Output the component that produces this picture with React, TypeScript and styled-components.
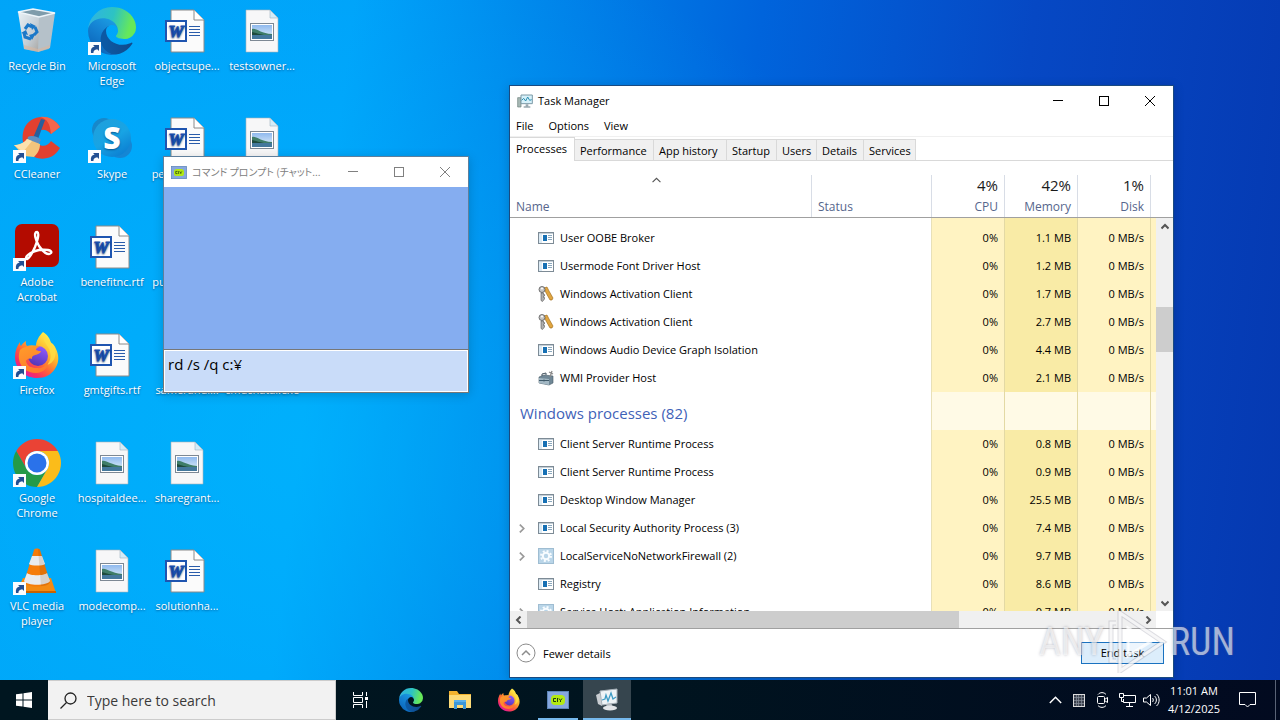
import React from "react";
import styled, { createGlobalStyle, css } from "styled-components";

const GlobalStyle = createGlobalStyle`
  *, *::before, *::after { box-sizing: border-box; }
  body {
    margin: 0;
    font-family: "Open Sans", "Noto Sans", "Noto Sans CJK JP", sans-serif;
    font-size: 11px;
    color: #000;
  }
  button, input, textarea { font: inherit; color: inherit; }
  button { border: 0; padding: 0; background: none; }
  svg { display: block; flex: none; }
`;

const Screen = styled.div`
  min-height: 100vh;
  display: flex;
  flex-direction: column;
  overflow: hidden;
`;

const Desktop = styled.main`
  position: relative;
  flex: 1;
  min-height: 680px;
  overflow: hidden;
  background:
    radial-gradient(ellipse 50% 80% at 24% 66%, rgba(0, 190, 255, 0.5), transparent),
    linear-gradient(97deg, #00a4f8 0%, #00a2fa 26%, #0088ec 38%, #0064dc 56%, #0648c4 76%, #0538b0 100%);
`;

const IconGrid = styled.div`
  display: grid;
  grid-template-columns: repeat(4, 75px);
  grid-auto-rows: 108px;
`;

const Shortcut = styled.button<{ $col: number; $row: number }>`
  grid-column: ${(p) => p.$col};
  grid-row: ${(p) => p.$row};
  display: flex;
  flex-direction: column;
  align-items: center;
  justify-content: flex-start;
  gap: 3px;
  padding: 7px 1px 0 0;
  color: #fff;
  line-height: 15px;
  text-shadow: 0 1px 2px rgba(0, 40, 90, 0.6);
`;

const ShortcutLabel = styled.span`
  white-space: pre-line;
`;

/* ---------- windows ---------- */

const Window = styled.section<{ $left: number; $top: number; $width: number; $border: string }>`
  position: absolute;
  left: ${(p) => p.$left}px;
  top: ${(p) => p.$top}px;
  width: ${(p) => p.$width}px;
  border: 1px solid ${(p) => p.$border};
  background: #fff;
  box-shadow: 0 2px 10px rgba(0, 0, 0, 0.18);
`;

const TitleBar = styled.header<{ $inactive?: boolean }>`
  display: flex;
  align-items: center;
  gap: 5px;
  height: 30px;
  padding-left: 7px;
  color: ${(p) => (p.$inactive ? "#808080" : "#000")};
  line-height: 16px;
`;

const Title = styled.h1<{ $kana?: boolean }>`
  flex: 1;
  min-width: 0;
  margin: 0;
  font-size: 11px;
  font-weight: 400;
  white-space: nowrap;
  ${(p) =>
    p.$kana &&
    css`
      font-family: "Noto Sans CJK JP", sans-serif;
      font-size: 10px;
      font-feature-settings: "palt";
    `}
`;

const Controls = styled.div`
  display: flex;
  height: 30px;
`;

const Control = styled.button`
  width: 46px;
  display: grid;
  place-items: center;
`;

const PromptOutput = styled.div`
  height: 163px;
  background: #85adf0;
`;

const PromptInput = styled.textarea`
  display: block;
  width: 100%;
  height: 42px;
  padding: 2px 3px;
  border: 1px solid #fff;
  outline: 1px solid #777;
  outline-offset: 0;
  resize: none;
  overflow: hidden;
  background: #c9dcf9;
  font-size: 15px;
  line-height: 22px;
`;

const MenuBar = styled.nav`
  display: flex;
  gap: 15px;
  height: 21px;
  padding: 0 6px 1px;
  border-bottom: 1px solid #f0f0f0;
  line-height: 18px;
`;

const TabBar = styled.div`
  display: flex;
  align-items: flex-end;
  height: 24px;
  border-bottom: 1px solid #d9d9d9;
`;

const Tab = styled.button<{ $width: number; $active?: boolean }>`
  width: ${(p) => p.$width}px;
  height: ${(p) => (p.$active ? 24 : 21)}px;
  padding: 1px 0 0 5px;
  text-align: left;
  white-space: nowrap;
  line-height: 20px;
  border: 1px solid #d9d9d9;
  border-left-width: 0;
  border-bottom-width: 0;
  background: #f0f0f0;
  ${(p) =>
    p.$active &&
    css`
      margin-bottom: -1px;
      padding: 0 0 2px 6px;
      background: #fff;
    `}
`;

const ListArea = styled.div`
  display: grid;
  grid-template-columns: minmax(0, 1fr) 17px;
  height: 450px;
`;

const ListClip = styled.div`
  overflow: hidden;
`;

const ScrollColumn = styled.div`
  display: flex;
  flex-direction: column;
`;

const HeaderFill = styled.div`
  height: 57px;
  border-bottom: 1px solid #a0a0a0;
`;

const Table = styled.table`
  width: 100%;
  table-layout: fixed;
  border-collapse: separate;
  border-spacing: 0;
`;

const HeadCell = styled.th<{ $numeric?: boolean }>`
  height: 57px;
  padding: 14px 0 0;
  border-bottom: 1px solid #a0a0a0;
  font-size: 12px;
  font-weight: 400;
  color: #56668c;
  vertical-align: top;
  text-align: ${(p) => (p.$numeric ? "right" : "left")};
`;

const HeadInner = styled.div`
  display: flex;
  flex-direction: column;
  height: 42px;
  padding: 0 6px;
  line-height: 21px;
  border-right: 1px solid #d8dde6;
`;

const Total = styled.span`
  height: 21px;
  font-size: 15px;
  color: #1a1a1a;
`;

const SortMark = styled.span`
  height: 21px;
  display: flex;
  justify-content: center;
  padding: 1px 8px 0 0;
`;

const Row = styled.tr<{ $height: number }>`
  height: ${(p) => p.$height}px;
`;

const NameCell = styled.td`
  padding: 0 0 0 7px;
  white-space: nowrap;
`;

const NameLine = styled.div`
  display: grid;
  grid-template-columns: 9px 16px 1fr;
  column-gap: 12px;
  align-items: center;
  line-height: 16px;
  & > :last-child { margin-left: -6px; }
`;

const GroupCell = styled.th`
  padding: 4px 0 0 10px;
  text-align: left;
  font-size: 15px;
  font-weight: 400;
  line-height: 20px;
  color: #3f62b8;
`;

const tones = { light: "#fff3c2", strong: "#f9eba6", pale: "#fffae6" };

const ValueCell = styled.td<{ $tone: keyof typeof tones }>`
  padding: 0 6px 0 0;
  border-right: 1px solid #e3d9a4;
  background: ${(p) => tones[p.$tone]};
  text-align: right;
  white-space: nowrap;
  line-height: 16px;
`;

const PlainCell = styled.td`
  padding: 0;
  border-right: 1px solid #e8e0b8;
`;

const TailCell = styled.td<{ $tone: keyof typeof tones }>`
  padding: 0;
  background: ${(p) => tones[p.$tone]};
`;

const ScrollTrack = styled.div<{ $horizontal?: boolean }>`
  display: flex;
  flex-direction: ${(p) => (p.$horizontal ? "row" : "column")};
  background: #f0f0f0;
  ${(p) => (p.$horizontal ? "height: 17px; margin-right: 17px;" : "flex: 1;")}
`;

const ScrollButton = styled.button`
  width: 17px;
  height: 17px;
  display: grid;
  place-items: center;
`;

const ScrollSpace = styled.div<{ $grow: number; $thumb?: boolean }>`
  flex: ${(p) => p.$grow} 1 0;
  background: ${(p) => (p.$thumb ? "#cdcdcd" : "transparent")};
`;

const Footer = styled.footer`
  display: flex;
  align-items: center;
  justify-content: space-between;
  height: 49px;
  padding: 0 9px 0 6px;
  border-top: 1px solid #a0a0a0;
`;

const DetailsToggle = styled.button`
  display: flex;
  align-items: center;
  gap: 7px;
`;

const EndTask = styled.button`
  width: 83px;
  height: 22px;
  border: 1px solid #1a72c0;
  background: #dcedfb;
  line-height: 18px;
`;

/* ---------- watermark ---------- */

const Watermark = styled.div`
  position: absolute;
  z-index: 2;
  left: 1039px;
  top: 610px;
  display: flex;
  align-items: center;
  gap: 2px;
  height: 64px;
  font-family: "Roboto Condensed", "Liberation Sans Narrow", "Roboto", sans-serif;
  font-size: 38px;
  line-height: 48px;
  color: rgba(255, 255, 255, 0.6);
  text-shadow: 0 0 3px rgba(90, 90, 110, 0.4);
  pointer-events: none;
`;

/* ---------- taskbar ---------- */

const Taskbar = styled.footer`
  display: flex;
  height: 40px;
  background: linear-gradient(90deg, #001620, #00141f 50%, #020a20);
  color: #fff;
`;

const TaskButton = styled.button<{ $running?: boolean; $active?: boolean }>`
  width: 48px;
  display: grid;
  place-items: center;
  background: ${(p) => (p.$active ? "#36454e" : "transparent")};
  ${(p) =>
    (p.$running || p.$active) &&
    css`
      padding-top: 2px;
      border-bottom: 2px solid #76b9ed;
    `}
  ${(p) =>
    p.$running &&
    css`
      width: 40px;
      margin: 0 4px;
    `}
`;

const TaskViewButton = styled(TaskButton)`
  margin-right: 2px;
`;

const Search = styled.label`
  display: flex;
  align-items: center;
  gap: 10px;
  width: 288px;
  padding-left: 12px;
  border: 1px solid #ccc;
  border-left: 0;
  background: #f2f2f2;
  color: #222;
`;

const SearchInput = styled.input`
  flex: 1;
  min-width: 0;
  padding: 0;
  border: 0;
  outline: 0;
  background: none;
  font-size: 14px;
  &::placeholder { color: #3a3a3a; opacity: 1; }
`;

const Apps = styled.div`
  display: flex;
  gap: 1px;
  flex: 1;
`;

const Tray = styled.div`
  display: flex;
  align-items: center;
`;

const TrayButton = styled.button`
  width: 24px;
  height: 40px;
  display: grid;
  place-items: center;
`;

const Clock = styled.time`
  width: 62px;
  line-height: 18px;
  text-align: center;
  white-space: nowrap;
`;

const NoticeButton = styled(TrayButton)`
  width: 44px;
  margin-right: 6px;
`;

const ShowDesktop = styled.button`
  width: 5px;
  height: 40px;
  border-left: 1px solid #5a6376;
`;

/* ---------- icons ---------- */

const LinkBadge = () => (
  <g>
    <rect x="0" y="35" width="13" height="13" fill="#fafcff" />
    <path d="M3 46c-.6-3.6.6-6 3.600-6.400L5 38h6v6l-1.800-1.800C6.500 42.600 5.400 43.600 5.400 46z" fill="#224f93" />
  </g>
);

const EdgeIcon = ({ size = 48, link = false }: { size?: number; link?: boolean }) => (
  <svg width={size} height={size} viewBox="0 0 48 48" aria-hidden="true">
    <defs>
      <linearGradient id="edgeA" x1=".2" y1=".5" x2="1" y2=".5"><stop stopColor="#0c59a4" /><stop offset="1" stopColor="#114a8b" /></linearGradient>
      <linearGradient id="edgeB" x1=".8" y1=".1" x2=".3" y2="1"><stop stopColor="#1b9de2" /><stop offset=".4" stopColor="#1584d4" /><stop offset="1" stopColor="#0a63b8" /></linearGradient>
      <linearGradient id="edgeC" x1="0" y1=".3" x2="1" y2=".5"><stop stopColor="#2fb3e3" /><stop offset=".5" stopColor="#2dc3c3" /><stop offset=".9" stopColor="#66e85a" /></linearGradient>
    </defs>
    <g transform="scale(.1875) translate(-4.630 -4.920)">
      <path fill="url(#edgeA)" d="M235.680 195.460a93.730 93.730 0 0 1-10.540 4.710 101.870 101.870 0 0 1-35.900 6.460c-47.320 0-88.540-32.550-88.540-74.320A31.480 31.480 0 0 1 117.130 105c-42.800 1.800-53.800 46.400-53.800 72.530 0 73.880 68.090 81.370 82.760 81.370 7.910 0 19.840-2.300 27-4.560l1.310-.44a128.340 128.340 0 0 0 66.600-52.800 4 4 0 0 0-5.320-5.640Z" />
      <path fill="url(#edgeB)" d="M110.340 246.340A79.200 79.200 0 0 1 87.600 225a80.720 80.720 0 0 1 29.530-120c3.120-1.470 8.450-4.130 15.540-4a32.350 32.350 0 0 1 25.690 13 31.880 31.880 0 0 1 6.360 18.660c0-.21 24.460-79.600-80-79.600-43.900 0-80 41.660-80 78.210a130.150 130.150 0 0 0 12.110 56 128 128 0 0 0 156.380 67.110 75.550 75.550 0 0 1-62.780-8Z" />
      <path fill="url(#edgeC)" d="M156.940 153.780c-.81 1.050-3.300 2.500-3.300 5.660 0 2.610 1.700 5.120 4.720 7.230 14.380 10 41.490 8.680 41.560 8.680a59.560 59.560 0 0 0 30.270-8.350 61.380 61.380 0 0 0 30.430-52.880c.26-22.410-8-37.310-11.340-43.910-21.190-41.450-66.930-65.290-116.670-65.290a128 128 0 0 0-128 126.200c.48-36.540 36.800-66.050 80-66.050 3.500 0 23.460.34 42 10.070 16.340 8.580 24.900 18.940 30.850 29.210 6.180 10.670 7.280 24.150 7.280 29.520s-2.740 13.330-7.800 19.910Z" />
    </g>
    {link && <LinkBadge />}
  </svg>
);

const FirefoxIcon = ({ size = 48, link = false }: { size?: number; link?: boolean }) => (
  <svg width={size} height={size} viewBox="0 0 48 48" aria-hidden="true">
    <defs>
      <linearGradient id="ffA" x1=".8" y1=".1" x2=".2" y2=".9"><stop stopColor="#fff04a" /><stop offset=".35" stopColor="#ffb22c" /><stop offset=".6" stopColor="#ff6a35" /><stop offset=".85" stopColor="#f52f62" /><stop offset="1" stopColor="#e3209a" /></linearGradient>
      <linearGradient id="ffB" x1=".7" y1="0" x2=".3" y2="1"><stop stopColor="#9059ff" /><stop offset="1" stopColor="#5235b4" /></linearGradient>
      <linearGradient id="ffC" x1=".2" y1="0" x2=".6" y2="1"><stop stopColor="#ff9b2a" /><stop offset="1" stopColor="#ff7a2c" /></linearGradient>
    </defs>
    <path d="M30 1c5 3 7 7 8 11 3 1 4 4 5 6 3 6 3 13 0 18-4 8-11 11-19 11C12 47 2 38 2 26c0-6 2-11 5-15 0 2 0 3 1 4 1-2 3-4 5-5-.5 2 0 4 1 5 3-1 6-1 9 0 0-5 3-10 7-14z" fill="url(#ffA)" />
    <path d="M31 2c-2 6 1 9 4 14 4 7 3 14-1 18 7-2 10-9 8-17-2-6-9-8-11-15z" fill="#ffdf45" opacity=".8" />
    <circle cx="25" cy="25" r="10" fill="url(#ffB)" />
    <path d="M7 19c3-3 7-4 11-2 2-3 6-3 9-1-3 0-4 2-4 3 2 1 4 1 5 1-1 3-3 3-6 4-3 1-3 2-3 4-3-1-5 0-6 2 1 5 5 7 11 7 6 1 10-3 11-8 1 8-5 13-12 13C14 42 7 36 6 28c-.5-3 0-6 1-9z" fill="url(#ffC)" />
    {link && <LinkBadge />}
  </svg>
);

const BinIcon = () => (
  <svg width="48" height="48" viewBox="0 0 48 48" aria-hidden="true">
    <defs>
      <linearGradient id="binA" x1="0" y1="0" x2="1" y2="1"><stop stopColor="#e9f1f6" /><stop offset=".6" stopColor="#c4cdd4" /><stop offset="1" stopColor="#a8a49f" /></linearGradient>
    </defs>
    <path d="M5 5l22 4-1 36-15-3z" fill="url(#binA)" />
    <path d="M26 9l16-3-5 35-12 4z" fill="#b5c1c9" />
    <path d="M5 5L20 2l22 4-16 4z" fill="#7f9cab" stroke="#eef5fa" strokeWidth="1.500" />
    <path d="M11 38l14 4 12-4-1 4-11 3-14-3z" fill="#d8b8a0" opacity=".6" />
    <path d="M12 22l3-4 4 2M22 20l2 5-3 3M18 32l-6-2-1-4" fill="none" stroke="#1b78c8" strokeWidth="3" />
    <path d="M17 16l6 3-4 4zM23 26l-4 7-3-5zM8 26l5-3 2 5z" fill="#1b78c8" />
  </svg>
);

const CCleanerIcon = () => (
  <svg width="48" height="48" viewBox="0 0 48 48" aria-hidden="true">
    <path d="M47 12C38-2 17-1 11 14c-6 18 8 33 23 29 6-1 10-5 13-10l-9-7c-4 7-13 6-15-1-2-8 7-15 15-6z" fill="#e2402f" />
    <path d="M47 12C42 4 34 1 27 2c7 2 10 6 11 17z" fill="#f4664c" />
    <path d="M28 4l4 1-7 19-5-1z" fill="#285f9c" />
    <path d="M15 22c3-2 10-1 13 3l-3 5-11-4z" fill="#5d8ec2" />
    <path d="M14 24l13 5c0 6-3 10-6 13l-10-1-10-11c5 0 10-2 13-6z" fill="#f3c57c" />
    <path d="M14 24l5 2-9 11-9-7c5 0 10-2 13-6z" fill="#fce2ae" />
    <LinkBadge />
  </svg>
);

const SkypeIcon = () => (
  <svg width="48" height="48" viewBox="0 0 48 48" aria-hidden="true">
    <defs><linearGradient id="skyA" x1=".2" y1="0" x2=".8" y2="1"><stop stopColor="#1fa0dc" /><stop offset=".5" stopColor="#18a4e4" /><stop offset="1" stopColor="#0b7cd0" /></linearGradient></defs>
    <circle cx="16" cy="15" r="12" fill="#1788ca" />
    <circle cx="32" cy="31" r="12" fill="#1586d4" />
    <circle cx="24" cy="23" r="19" fill="url(#skyA)" />
    <text x="24" y="34" textAnchor="middle" fontFamily="Open Sans, sans-serif" fontSize="30" fontWeight="800" fill="#fff">S</text>
    <LinkBadge />
  </svg>
);

const AcrobatIcon = () => (
  <svg width="48" height="48" viewBox="0 0 48 48" aria-hidden="true">
    <rect x="2" y="1" width="44" height="43" rx="7" fill="#b30b00" />
    <path d="M24 9c-4 0-1 9 2 14 4 6 9 10 12 7 2-3-6-4-12-3-6 1-13 5-13 8 1 4 6-4 9-11 2-5 5-14 2-15z" fill="none" stroke="#fff" strokeWidth="2.400" strokeLinejoin="round" />
    <LinkBadge />
  </svg>
);

const ChromeIcon = () => (
  <svg width="48" height="48" viewBox="0 0 48 48" aria-hidden="true">
    <path d="M24 12h20.780A24 24 0 0 0 3.220 12l10.390 18A12 12 0 0 1 24 12z" fill="#ea4335" />
    <path d="M13.610 30L3.220 12A24 24 0 0 0 24 48l10.390-18a12 12 0 0 1-20.780 0z" fill="#249a48" />
    <path d="M34.390 30L24 48a24 24 0 0 0 20.780-36H24a12 12 0 0 1 10.390 18z" fill="#fbbc1a" />
    <circle cx="24" cy="24" r="12" fill="#fff" />
    <circle cx="24" cy="24" r="9.500" fill="#2a72ea" />
    <LinkBadge />
  </svg>
);

const VlcIcon = () => (
  <svg width="48" height="48" viewBox="0 0 48 48" aria-hidden="true">
    <path d="M10 31h28l5 15H3z" fill="#f48a12" />
    <path d="M3 44h40v2H3z" fill="#c96200" />
    <path d="M21 3c0-2 6-2 6 0l10 32c-2 6-24 6-26 0z" fill="#f57c0a" />
    <path d="M19 9h10l3 8c-2 2-14 2-16 0zM14 26c3 3 17 3 20 0l3 8c-3 5-23 5-26 0z" fill="#e9ebee" />
    <path d="M25 2c2 0 2 0 2 1l10 32c-1 3-5 4-9 4z" fill="#7a3a00" opacity=".15" />
    <LinkBadge />
  </svg>
);

const WordIcon = () => (
  <svg width="48" height="48" viewBox="0 0 48 48" aria-hidden="true">
    <path d="M8 3h23l10 10v32H8z" fill="#fbfbfb" stroke="#8a8a8a" />
    <path d="M31 3v10h10" fill="#fff" stroke="#8a8a8a" />
    <rect x="3" y="14" width="20" height="20" fill="#fff" stroke="#1f55b0" strokeWidth="2" />
    <text x="13" y="30" textAnchor="middle" fontFamily="Liberation Serif, serif" fontSize="17" fontWeight="700" fontStyle="italic" fill="#1b4fae" stroke="#1b4fae">W</text>
    <path d="M26 19.500h11M26 22.500h11M26 25.500h11M26 28.500h11" stroke="#2a5caa" />
  </svg>
);

const PictureIcon = () => (
  <svg width="48" height="48" viewBox="0 0 48 48" aria-hidden="true">
    <defs><linearGradient id="picSky" x1="0" y1="0" x2="0" y2="1"><stop stopColor="#8fb9ee" /><stop offset="1" stopColor="#e6f3fa" /></linearGradient></defs>
    <path d="M8 3h24l8 8v34H8z" fill="#f7f7f8" stroke="#a9b3ba" strokeWidth=".6" />
    <path d="M32 3v8h8z" fill="#d4ecf8" stroke="#9fb4c0" strokeWidth=".6" />
    <rect x="12.500" y="16.500" width="23" height="17" fill="#fff" stroke="#7d8894" />
    <rect x="14" y="18" width="20" height="14" fill="url(#picSky)" />
    <path d="M14 22c5-1 8 4 20 5v1H14z" fill="#3f7d68" />
    <path d="M14 25c4 1 6 2 12 3H14z" fill="#1e4a3c" />
    <path d="M14 28h20v4H14z" fill="#44789c" />
  </svg>
);

const PromptIcon = ({ width = 16, height = 13 }: { width?: number; height?: number }) => (
  <svg width={width} height={height} viewBox="0 0 22 18" aria-hidden="true">
    <rect x=".5" y=".5" width="21" height="17" fill="#86a7de" stroke="#5d86b8" />
    <rect x="4" y="4" width="14" height="10" rx="4" fill="#b3ea12" />
    <path d="M9 7.500H6.500v3H9M10.500 7v4M12 7.500l1.500 2 1.500-2M13.500 9.500v1.500" fill="none" stroke="#1f3a10" />
  </svg>
);

const MonitorIcon = ({ size = 16 }: { size?: number }) => (
  <svg width={size} height={size} viewBox="0 0 24 24" aria-hidden="true">
    <path d="M1 7h5v14H1z" fill="#a7b9b5" stroke="#6d807c" />
    <path d="M6 3h17v13H6z" fill="#d6f1fa" stroke="#7d9aa6" strokeWidth="1.500" />
    <path d="M7 11l3-3 3 4 3-6 3 5 3-1" fill="none" stroke="#2d8fb0" strokeWidth="1.500" />
    <path d="M13 17h4v3h3v2h-10v-2h3z" fill="#9aa9b0" />
  </svg>
);

const ActivityIcon = () => (
  <svg width="26" height="26" viewBox="0 0 26 26" aria-hidden="true">
    <path d="M2 8l6-3v14l-4-2z" fill="#c9cdd2" />
    <path d="M6 4l17-2v14l-15 2z" fill="#eef3f6" stroke="#a7b1b8" />
    <path d="M8 13l3-1 1-4 2 6 3-8 2 6 3-2" fill="none" stroke="#3e9bc4" strokeWidth="1.300" />
    <path d="M12 17l5-1 2 4-6 1z" fill="#b5bcc2" />
    <ellipse cx="16" cy="21" rx="7" ry="2.500" fill="#e2e5e8" />
  </svg>
);

const FolderIcon = () => (
  <svg width="22" height="20" viewBox="0 0 22 20" aria-hidden="true">
    <path d="M0 1h8l2 3h12v14H0z" fill="#f3b32f" />
    <path d="M0 5h22v13H0z" fill="#fddb78" />
    <path d="M5 19v-8h12v8h-3v-4H8v4z" fill="#3b97d8" />
    <path d="M5 10h12v2H5z" fill="#5ab0ea" />
  </svg>
);

type ProcIcon = "app" | "keys" | "tools" | "gear";

const ProcessIcon = ({ kind }: { kind: ProcIcon }) => (
  <svg width="16" height="16" viewBox="0 0 16 16" aria-hidden="true">
    {kind === "app" && (
      <>
        <rect x=".5" y="2.500" width="15" height="11" fill="#fff" stroke="#7d8b96" />
        <path d="M1 3h14v1H1z" fill="#c3ced6" />
        <path d="M1 4h3v9H1z" fill="#dcebf5" />
        <rect x="5" y="5" width="4" height="6" fill="#1670b4" />
        <path d="M10 5.500h4M10 7.500h4M10 9.500h4" stroke="#8ba8bd" />
      </>
    )}
    {kind === "keys" && (
      <>
        <path d="M6 2l3-1 2 4 4 7-1 2-2 0-5-9z" fill="#e0a540" stroke="#9a6512" strokeWidth=".6" />
        <circle cx="4" cy="3.500" r="3" fill="#c4c4c4" stroke="#555" strokeWidth=".8" />
        <circle cx="4" cy="2.600" r="1" fill="#fff" />
        <path d="M3 7h2.500v1.500h1v1.500h-1v1.500h1V13l-2 2.500-1.500-1z" fill="#b0b0b0" stroke="#555" strokeWidth=".6" />
      </>
    )}
    {kind === "tools" && (
      <>
        <path d="M1 7l5-2 9 1v7l-4 2-10-2z" fill="#6f8796" stroke="#485a66" strokeWidth=".6" />
        <path d="M1 8l10 1v6L1 13z" fill="#a3b8c4" />
        <path d="M4 6V4l4-1v2" fill="none" stroke="#445560" />
        <path d="M12 7l2-6M11 2l4 2" stroke="#8a8a8a" strokeWidth="1.300" />
        <path d="M1 10.500h10M6 9.500v2" stroke="#405a6a" />
      </>
    )}
    {kind === "gear" && (
      <>
        <rect x=".5" y=".5" width="15" height="15" fill="#b9d5e8" stroke="#9fbdd2" />
        <circle cx="8" cy="8" r="5" fill="none" stroke="#f8fcff" strokeWidth="2" strokeDasharray="2 1.930" />
        <circle cx="8" cy="8" r="3.200" fill="none" stroke="#f8fcff" strokeWidth="2" />
      </>
    )}
  </svg>
);

const MinimizeGlyph = () => (
  <svg width="10" height="10" viewBox="0 0 10 10" aria-hidden="true"><path d="M0 4.500h10" stroke="currentColor" /></svg>
);
const MaximizeGlyph = () => (
  <svg width="10" height="10" viewBox="0 0 10 10" aria-hidden="true"><rect x=".5" y=".5" width="9" height="9" fill="none" stroke="currentColor" /></svg>
);
const CloseGlyph = () => (
  <svg width="10" height="10" viewBox="0 0 10 10" aria-hidden="true"><path d="M0 0l10 10M10 0L0 10" stroke="currentColor" /></svg>
);

const arrows = { up: 0, right: 90, down: 180, left: 270 };
const Chevron = ({ to, size = 8, color = "#555", weight = 2 }: { to: keyof typeof arrows; size?: number; color?: string; weight?: number }) => (
  <svg width={size} height={size} viewBox="0 0 8 8" aria-hidden="true">
    <path d="M0.500 5.500L4 2l3.500 3.500" transform={`rotate(${arrows[to]} 4 4)`} fill="none" stroke={color} strokeWidth={weight} />
  </svg>
);

const WindowControls = () => (
  <Controls>
    <Control aria-label="Minimize"><MinimizeGlyph /></Control>
    <Control aria-label="Maximize"><MaximizeGlyph /></Control>
    <Control aria-label="Close"><CloseGlyph /></Control>
  </Controls>
);

/* ---------- data ---------- */

const shortcuts: { col: number; row: number; label: string; icon: React.ReactNode }[] = [
  { col: 1, row: 1, label: "Recycle Bin", icon: <BinIcon /> },
  { col: 1, row: 2, label: "CCleaner", icon: <CCleanerIcon /> },
  { col: 1, row: 3, label: "Adobe\nAcrobat", icon: <AcrobatIcon /> },
  { col: 1, row: 4, label: "Firefox", icon: <FirefoxIcon link /> },
  { col: 1, row: 5, label: "Google\nChrome", icon: <ChromeIcon /> },
  { col: 1, row: 6, label: "VLC media\nplayer", icon: <VlcIcon /> },
  { col: 2, row: 1, label: "Microsoft\nEdge", icon: <EdgeIcon link /> },
  { col: 2, row: 2, label: "Skype", icon: <SkypeIcon /> },
  { col: 2, row: 3, label: "benefitnc.rtf", icon: <WordIcon /> },
  { col: 2, row: 4, label: "gmtgifts.rtf", icon: <WordIcon /> },
  { col: 2, row: 5, label: "hospitaldee...", icon: <PictureIcon /> },
  { col: 2, row: 6, label: "modecomp...", icon: <PictureIcon /> },
  { col: 3, row: 1, label: "objectsupe...", icon: <WordIcon /> },
  { col: 3, row: 2, label: "performedb...", icon: <WordIcon /> },
  { col: 3, row: 3, label: "purchasehu...", icon: <PictureIcon /> },
  { col: 3, row: 4, label: "samerandi...", icon: <PictureIcon /> },
  { col: 3, row: 5, label: "sharegrant...", icon: <PictureIcon /> },
  { col: 3, row: 6, label: "solutionha...", icon: <WordIcon /> },
  { col: 4, row: 1, label: "testsowner...", icon: <PictureIcon /> },
  { col: 4, row: 2, label: "", icon: <PictureIcon /> },
  { col: 4, row: 4, label: "cmdchatai.exe", icon: <PromptIcon width={48} height={48} /> },
];

const tabs = [
  { label: "Processes", width: 65 },
  { label: "Performance", width: 79 },
  { label: "App history", width: 73 },
  { label: "Startup", width: 50 },
  { label: "Users", width: 40 },
  { label: "Details", width: 47 },
  { label: "Services", width: 52 },
];

type Process = { name: string; icon: ProcIcon; memory: string; expandable?: boolean };

const background: Process[] = [
  { name: "User OOBE Broker", icon: "app", memory: "1.1 MB" },
  { name: "Usermode Font Driver Host", icon: "app", memory: "1.2 MB" },
  { name: "Windows Activation Client", icon: "keys", memory: "1.7 MB" },
  { name: "Windows Activation Client", icon: "keys", memory: "2.7 MB" },
  { name: "Windows Audio Device Graph Isolation", icon: "app", memory: "4.4 MB" },
  { name: "WMI Provider Host", icon: "tools", memory: "2.1 MB" },
];

const system: Process[] = [
  { name: "Client Server Runtime Process", icon: "app", memory: "0.8 MB" },
  { name: "Client Server Runtime Process", icon: "app", memory: "0.9 MB" },
  { name: "Desktop Window Manager", icon: "app", memory: "25.5 MB" },
  { name: "Local Security Authority Process (3)", icon: "app", memory: "7.4 MB", expandable: true },
  { name: "LocalServiceNoNetworkFirewall (2)", icon: "gear", memory: "9.7 MB", expandable: true },
  { name: "Registry", icon: "app", memory: "8.6 MB" },
  { name: "Service Host: Application Information", icon: "gear", memory: "0.7 MB", expandable: true },
];

const ProcessRow = ({ process }: { process: Process }) => (
  <Row $height={28}>
    <NameCell>
      <NameLine>
        <span>{process.expandable && <Chevron to="right" size={9} color="#9a9a9a" weight={1.500} />}</span>
        <ProcessIcon kind={process.icon} />
        <span>{process.name}</span>
      </NameLine>
    </NameCell>
    <PlainCell />
    <ValueCell $tone="light">0%</ValueCell>
    <ValueCell $tone="strong">{process.memory}</ValueCell>
    <ValueCell $tone="light">0 MB/s</ValueCell>
    <TailCell $tone="light" />
  </Row>
);

const totals = [
  { name: "CPU", value: "4%" },
  { name: "Memory", value: "42%" },
  { name: "Disk", value: "1%" },
];

const TaskManager = () => (
  <Window $left={509} $top={85} $width={665} $border="#1a4a80">
    <TitleBar>
      <MonitorIcon />
      <Title>Task Manager</Title>
      <WindowControls />
    </TitleBar>
    <MenuBar>
      <button>File</button>
      <button>Options</button>
      <button>View</button>
    </MenuBar>
    <TabBar role="tablist">
      {tabs.map((tab, i) => (
        <Tab key={tab.label} role="tab" aria-selected={i === 0} $width={tab.width} $active={i === 0}>
          {tab.label}
        </Tab>
      ))}
    </TabBar>
    <ListArea>
      <ListClip>
        <Table>
          <colgroup>
            <col />
            <col width="120" />
            <col width="73" />
            <col width="73" />
            <col width="73" />
            <col width="5" />
          </colgroup>
          <thead>
            <tr>
              <HeadCell>
                <HeadInner>
                  <SortMark><Chevron to="up" size={9} weight={1} /></SortMark>
                  Name
                </HeadInner>
              </HeadCell>
              <HeadCell>
                <HeadInner>
                  <Total />
                  Status
                </HeadInner>
              </HeadCell>
              {totals.map((total) => (
                <HeadCell key={total.name} $numeric>
                  <HeadInner>
                    <Total>{total.value}</Total>
                    {total.name}
                  </HeadInner>
                </HeadCell>
              ))}
              <HeadCell />
            </tr>
          </thead>
          <tbody>
            <Row $height={6}>
              <td />
              <PlainCell />
              <ValueCell $tone="light" />
              <ValueCell $tone="strong" />
              <ValueCell $tone="light" />
              <TailCell $tone="light" />
            </Row>
            {background.map((process, i) => <ProcessRow key={i} process={process} />)}
            <Row $height={38}>
              <GroupCell scope="rowgroup">Windows processes (82)</GroupCell>
              <PlainCell />
              <ValueCell $tone="pale" />
              <ValueCell $tone="pale" />
              <ValueCell $tone="pale" />
              <TailCell $tone="pale" />
            </Row>
            {system.map((process, i) => <ProcessRow key={i} process={process} />)}
          </tbody>
        </Table>
      </ListClip>
      <ScrollColumn>
        <HeaderFill />
        <ScrollTrack>
          <ScrollButton aria-label="Scroll up"><Chevron to="up" /></ScrollButton>
          <ScrollSpace $grow={72} />
          <ScrollSpace $grow={45} $thumb />
          <ScrollSpace $grow={242} />
          <ScrollButton aria-label="Scroll down"><Chevron to="down" /></ScrollButton>
        </ScrollTrack>
      </ScrollColumn>
    </ListArea>
    <ScrollTrack $horizontal>
      <ScrollButton aria-label="Scroll left"><Chevron to="left" /></ScrollButton>
      <ScrollSpace $grow={433} $thumb />
      <ScrollSpace $grow={180} />
      <ScrollButton aria-label="Scroll right"><Chevron to="right" /></ScrollButton>
    </ScrollTrack>
    <Footer>
      <DetailsToggle>
        <svg width="20" height="20" viewBox="0 0 20 20" aria-hidden="true">
          <circle cx="10" cy="10" r="9" fill="none" stroke="#8c8c8c" />
          <path d="M6 12l4-4 4 4" fill="none" stroke="#8c8c8c" strokeWidth="1.500" />
        </svg>
        Fewer details
      </DetailsToggle>
      <EndTask>End task</EndTask>
    </Footer>
  </Window>
);

const CommandPrompt = () => (
  <Window $left={163} $top={156} $width={306} $border="#5f7f9c">
    <TitleBar $inactive>
      <PromptIcon />
      <Title $kana>コマンド プロンプト (チャット...</Title>
      <WindowControls />
    </TitleBar>
    <PromptOutput />
    <PromptInput aria-label="Command" defaultValue="rd /s /q c:¥" spellCheck={false} />
  </Window>
);

export default function App() {
  return (
    <Screen>
      <GlobalStyle />
      <Desktop>
        <IconGrid>
          {shortcuts.map((item) => (
            <Shortcut key={`${item.col}-${item.row}`} $col={item.col} $row={item.row}>
              {item.icon}
              <ShortcutLabel>{item.label}</ShortcutLabel>
            </Shortcut>
          ))}
        </IconGrid>
        <CommandPrompt />
        <TaskManager />
        <Watermark>
          ANY
          <svg width="62" height="62" viewBox="0 0 62 62" aria-hidden="true">
            <g fill="none" stroke="rgba(120,120,140,.25)" strokeWidth="5">
              <path d="M10 12H5v38h5M14 2v58l43-29z" />
            </g>
            <g fill="none" stroke="rgba(255,255,255,.75)" strokeWidth="3">
              <path d="M10 12H5v38h5M14 2v58l43-29zM22 17v28l22-14z" />
            </g>
            <path d="M22 17v28l22-14z" fill="rgba(255,255,255,.5)" />
          </svg>
          RUN
        </Watermark>
      </Desktop>
      <Taskbar>
        <TaskButton aria-label="Start">
          <svg width="16" height="16" viewBox="0 0 16 16" aria-hidden="true">
            <path d="M0 2.300L6.500 1.400v6.100H0zM7.500 1.200L16 0v7.500H7.500zM0 8.500h6.500v6.100L0 13.700zM7.500 8.500H16V16l-8.500-1.200z" fill="#fff" />
          </svg>
        </TaskButton>
        <Search>
          <svg width="17" height="17" viewBox="0 0 17 17" aria-hidden="true">
            <circle cx="10.500" cy="6.500" r="5.500" fill="none" stroke="#222" strokeWidth="1.300" />
            <path d="M6.500 10.500L.5 16.500" stroke="#222" strokeWidth="1.300" />
          </svg>
          <SearchInput type="search" aria-label="Search" placeholder="Type here to search" />
        </Search>
        <Apps>
          <TaskViewButton aria-label="Task View">
            <svg width="17" height="16" viewBox="0 0 17 16" aria-hidden="true" fill="none" stroke="#fff">
              <path d="M1.500 0v3.500h9V0M1.500 16v-3.500h9V16M1.500 5.500h9v5h-9zM14.500 0v4M14.500 9v7" />
              <path d="M13 5h3v3h-3z" fill="#fff" stroke="none" />
            </svg>
          </TaskViewButton>
          <TaskButton aria-label="Microsoft Edge"><EdgeIcon size={24} /></TaskButton>
          <TaskButton aria-label="File Explorer"><FolderIcon /></TaskButton>
          <TaskButton aria-label="Firefox"><FirefoxIcon size={24} /></TaskButton>
          <TaskButton aria-label="Command Prompt" $running><PromptIcon width={22} height={18} /></TaskButton>
          <TaskButton aria-label="Task Manager" $active><ActivityIcon /></TaskButton>
        </Apps>
        <Tray>
          <TrayButton aria-label="Show hidden icons"><Chevron to="up" size={13} color="#fff" weight={0.900} /></TrayButton>
          <TrayButton aria-label="Input indicator">
            <svg width="12" height="13" viewBox="0 0 12 13" aria-hidden="true">
              <rect x=".5" y=".5" width="11" height="12" fill="#3a404c" stroke="#ddd" />
              <path d="M3.500 1v11M5.500 1v11M8.500 1v11M1 3.500h10M1 6.500h10M1 9.500h10" stroke="#8a909c" strokeWidth=".7" />
            </svg>
          </TrayButton>
          <TrayButton aria-label="Meet Now">
            <svg width="14" height="16" viewBox="0 0 14 16" aria-hidden="true" fill="none" stroke="#fff">
              <rect x="1.500" y="4.500" width="7" height="7" rx="1" />
              <path d="M8.500 7.500l3-2v5l-3-2M2 2.500C4 0 8 0 10 2.500M2 13.500c2 2.500 6 2.500 8 0" />
            </svg>
          </TrayButton>
          <TrayButton aria-label="Network">
            <svg width="17" height="14" viewBox="0 0 17 14" aria-hidden="true" fill="none" stroke="#fff">
              <path d="M5 2.500h11.500v7H4.500V6M10.500 10v3M7 13.500h7M.5.5h4v4h-4zM2.500 5v3.500h2" />
            </svg>
          </TrayButton>
          <TrayButton aria-label="Volume">
            <svg width="17" height="14" viewBox="0 0 17 14" aria-hidden="true" fill="none" stroke="#fff">
              <path d="M.5 5h3l4-3.500v11L3.500 9h-3zM9.500 5c1 1 1 3 0 4M11.500 3c2.500 2 2.500 6 0 8M13.500 1c3.500 3 3.500 9 0 12" />
            </svg>
          </TrayButton>
          <Clock>11:01 AM<br />4/12/2025</Clock>
          <NoticeButton aria-label="Notifications">
            <svg width="17" height="16" viewBox="0 0 17 16" aria-hidden="true" fill="none" stroke="#fff">
              <path d="M.5.5h16v12H11l-2.500 2.500L6 12.500H.5z" />
            </svg>
          </NoticeButton>
          <ShowDesktop aria-label="Show desktop" />
        </Tray>
      </Taskbar>
    </Screen>
  );
}
